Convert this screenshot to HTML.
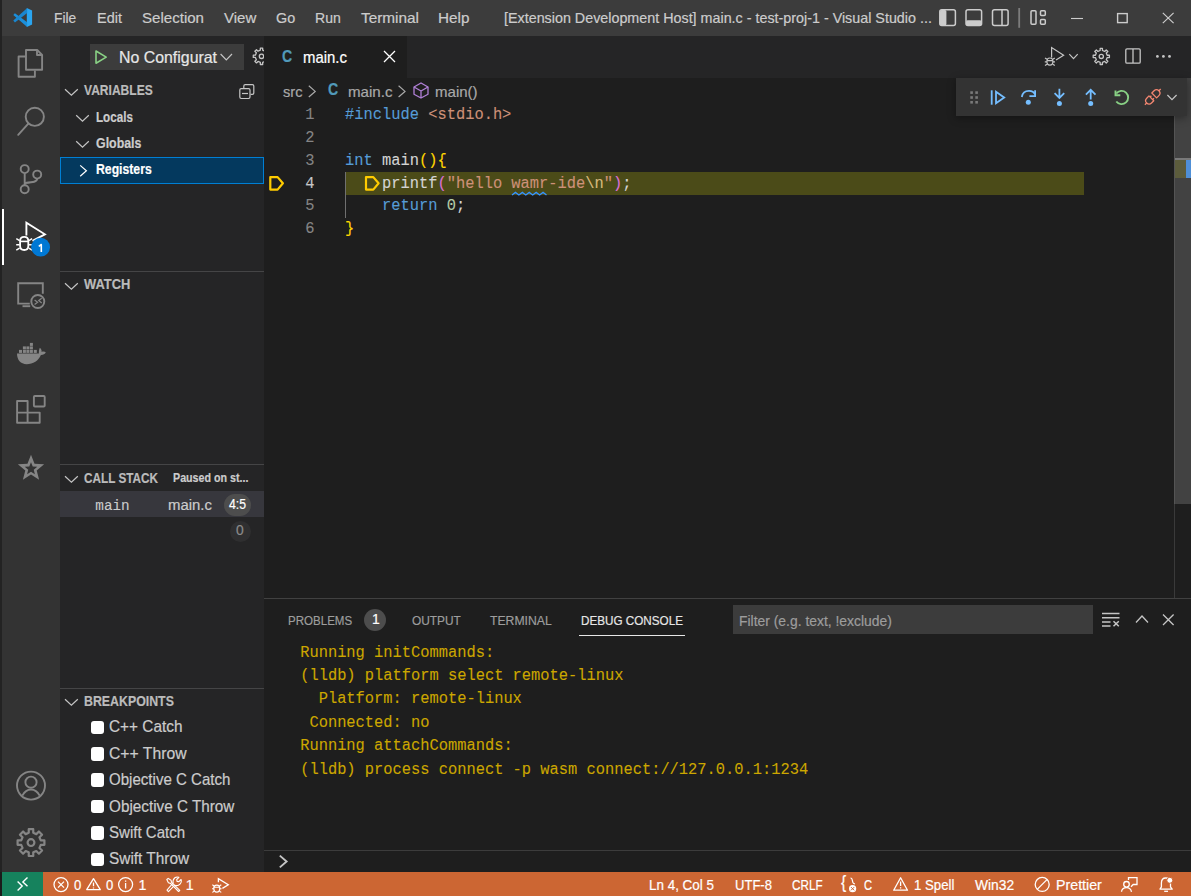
<!DOCTYPE html><html><head><meta charset="utf-8"><style>html,body{margin:0;padding:0;}body{width:1191px;height:896px;overflow:hidden;position:relative;background:#1e1e1e;font-family:"Liberation Sans",sans-serif;}</style></head><body>
<div style="position:absolute;left:0px;top:0px;width:1191px;height:896px;background:#1e1e1e;"></div>
<div style="position:absolute;left:0px;top:0px;width:2px;height:896px;background:#232323;"></div>
<div style="position:absolute;left:2px;top:0px;width:1189px;height:36px;background:#3c3c3c;"></div>
<div style="position:absolute;left:2px;top:36px;width:58px;height:836px;background:#333333;"></div>
<div style="position:absolute;left:60px;top:36px;width:204px;height:836px;background:#252526;"></div>
<div style="position:absolute;left:264px;top:36px;width:927px;height:42px;background:#252526;"></div>
<div style="position:absolute;left:264px;top:36px;width:143px;height:42px;background:#1e1e1e;"></div>
<div style="position:absolute;left:0px;top:872px;width:1191px;height:24px;background:#cc6633;"></div>
<div style="position:absolute;left:2px;top:872px;width:41px;height:24px;background:#16825d;"></div>
<div style="position:absolute;left:0px;top:872px;width:2px;height:24px;background:#1b1b1b;"></div>
<div style="position:absolute;left:54.40px;top:10.92px;font-family:'Liberation Sans', sans-serif;font-size:14.97px;line-height:14.97px;color:#cccccc;white-space:pre;-webkit-text-stroke:0.2px currentColor;transform:scaleX(0.9205);transform-origin:0 0;">File</div>
<div style="position:absolute;left:96.90px;top:10.92px;font-family:'Liberation Sans', sans-serif;font-size:14.97px;line-height:14.97px;color:#cccccc;white-space:pre;-webkit-text-stroke:0.2px currentColor;transform:scaleX(0.9653);transform-origin:0 0;">Edit</div>
<div style="position:absolute;left:142.00px;top:10.92px;font-family:'Liberation Sans', sans-serif;font-size:14.97px;line-height:14.97px;color:#cccccc;white-space:pre;-webkit-text-stroke:0.2px currentColor;transform:scaleX(1.0067);transform-origin:0 0;">Selection</div>
<div style="position:absolute;left:223.80px;top:10.92px;font-family:'Liberation Sans', sans-serif;font-size:14.97px;line-height:14.97px;color:#cccccc;white-space:pre;-webkit-text-stroke:0.2px currentColor;transform:scaleX(1.0026);transform-origin:0 0;">View</div>
<div style="position:absolute;left:275.70px;top:10.92px;font-family:'Liberation Sans', sans-serif;font-size:14.97px;line-height:14.97px;color:#cccccc;white-space:pre;-webkit-text-stroke:0.2px currentColor;transform:scaleX(0.9614);transform-origin:0 0;">Go</div>
<div style="position:absolute;left:315.20px;top:10.92px;font-family:'Liberation Sans', sans-serif;font-size:14.97px;line-height:14.97px;color:#cccccc;white-space:pre;-webkit-text-stroke:0.2px currentColor;transform:scaleX(0.9397);transform-origin:0 0;">Run</div>
<div style="position:absolute;left:360.60px;top:10.92px;font-family:'Liberation Sans', sans-serif;font-size:14.97px;line-height:14.97px;color:#cccccc;white-space:pre;-webkit-text-stroke:0.2px currentColor;transform:scaleX(1.0252);transform-origin:0 0;">Terminal</div>
<div style="position:absolute;left:438.20px;top:10.92px;font-family:'Liberation Sans', sans-serif;font-size:14.97px;line-height:14.97px;color:#cccccc;white-space:pre;-webkit-text-stroke:0.2px currentColor;transform:scaleX(1.0196);transform-origin:0 0;">Help</div>
<div style="position:absolute;left:503.70px;top:10.92px;font-family:'Liberation Sans', sans-serif;font-size:14.97px;line-height:14.97px;color:#cccccc;white-space:pre;-webkit-text-stroke:0.2px currentColor;transform:scaleX(0.9565);transform-origin:0 0;">[Extension Development Host] main.c - test-proj-1 - Visual Studio ...</div>
<div style="position:absolute;left:90px;top:44px;width:154px;height:26px;background:#3c3c3c;"></div>
<div style="position:absolute;left:118.90px;top:49.21px;font-family:'Liberation Sans', sans-serif;font-size:16.28px;line-height:16.28px;color:#e7e7e7;white-space:pre;-webkit-text-stroke:0.2px currentColor;transform:scaleX(0.9767);transform-origin:0 0;">No Configurat</div>
<div style="position:absolute;left:83.80px;top:83.44px;font-family:'Liberation Sans', sans-serif;font-size:14.53px;line-height:14.53px;color:#bbbbbb;font-weight:700;white-space:pre;-webkit-text-stroke:0.2px currentColor;transform:scaleX(0.8298);transform-origin:0 0;">VARIABLES</div>
<div style="position:absolute;left:96.00px;top:109.89px;font-family:'Liberation Sans', sans-serif;font-size:14.53px;line-height:14.53px;color:#cccccc;font-weight:700;white-space:pre;-webkit-text-stroke:0.2px currentColor;transform:scaleX(0.8035);transform-origin:0 0;">Locals</div>
<div style="position:absolute;left:96.20px;top:136.39px;font-family:'Liberation Sans', sans-serif;font-size:14.53px;line-height:14.53px;color:#cccccc;font-weight:700;white-space:pre;-webkit-text-stroke:0.2px currentColor;transform:scaleX(0.8537);transform-origin:0 0;">Globals</div>
<div style="position:absolute;left:60px;top:157px;width:204px;height:27px;background:#04395e;box-sizing:border-box;border:1px solid #007fd4;"></div>
<div style="position:absolute;left:96.20px;top:162.49px;font-family:'Liberation Sans', sans-serif;font-size:14.53px;line-height:14.53px;color:#ffffff;font-weight:700;white-space:pre;-webkit-text-stroke:0.2px currentColor;transform:scaleX(0.8423);transform-origin:0 0;">Registers</div>
<div style="position:absolute;left:60px;top:271px;width:204px;height:1px;background:#454546;"></div>
<div style="position:absolute;left:83.80px;top:277.39px;font-family:'Liberation Sans', sans-serif;font-size:14.53px;line-height:14.53px;color:#bbbbbb;font-weight:700;white-space:pre;-webkit-text-stroke:0.2px currentColor;transform:scaleX(0.8887);transform-origin:0 0;">WATCH</div>
<div style="position:absolute;left:60px;top:464px;width:204px;height:1px;background:#454546;"></div>
<div style="position:absolute;left:83.80px;top:470.69px;font-family:'Liberation Sans', sans-serif;font-size:14.53px;line-height:14.53px;color:#bbbbbb;font-weight:700;white-space:pre;-webkit-text-stroke:0.2px currentColor;transform:scaleX(0.8097);transform-origin:0 0;">CALL STACK</div>
<div style="position:absolute;left:172.90px;top:471.42px;font-family:'Liberation Sans', sans-serif;font-size:13.08px;line-height:13.08px;color:#cccccc;font-weight:700;white-space:pre;-webkit-text-stroke:0.2px currentColor;transform:scaleX(0.8178);transform-origin:0 0;">Paused on st...</div>
<div style="position:absolute;left:60px;top:491px;width:204px;height:26px;background:#37373d;"></div>
<div style="position:absolute;left:95.30px;top:498.55px;font-family:'Liberation Mono', monospace;font-size:14.3px;line-height:14.3px;color:#cccccc;white-space:pre;-webkit-text-stroke:0.1px currentColor;">main</div>
<div style="position:absolute;left:168.00px;top:496.57px;font-family:'Liberation Sans', sans-serif;font-size:15.26px;line-height:15.26px;color:#cccccc;white-space:pre;-webkit-text-stroke:0.2px currentColor;transform:scaleX(0.9790);transform-origin:0 0;">main.c</div>
<div style="position:absolute;left:224px;top:494px;width:27px;height:22px;background:#4d4d4d;border-radius:11px;"></div>
<div style="position:absolute;left:229.00px;top:497.19px;font-family:'Liberation Sans', sans-serif;font-size:14.53px;line-height:14.53px;color:#ffffff;white-space:pre;-webkit-text-stroke:0.2px currentColor;transform:scaleX(0.8414);transform-origin:0 0;">4:5</div>
<div style="position:absolute;left:230px;top:521px;width:21px;height:21px;background:#2f2f30;border-radius:11px;"></div>
<div style="position:absolute;left:236.00px;top:524.30px;font-family:'Liberation Sans', sans-serif;font-size:13.81px;line-height:13.81px;color:#8b8b8b;white-space:pre;-webkit-text-stroke:0.2px currentColor;">0</div>
<div style="position:absolute;left:60px;top:688px;width:204px;height:1px;background:#454546;"></div>
<div style="position:absolute;left:83.80px;top:693.69px;font-family:'Liberation Sans', sans-serif;font-size:14.53px;line-height:14.53px;color:#bbbbbb;font-weight:700;white-space:pre;-webkit-text-stroke:0.2px currentColor;transform:scaleX(0.8508);transform-origin:0 0;">BREAKPOINTS</div>
<div style="position:absolute;left:90.5px;top:720.6px;width:13.5px;height:13.5px;background:#ffffff;border-radius:3px;"></div>
<div style="position:absolute;left:108.50px;top:719.30px;font-family:'Liberation Sans', sans-serif;font-size:15.70px;line-height:15.70px;color:#cccccc;white-space:pre;-webkit-text-stroke:0.2px currentColor;transform:scaleX(0.9795);transform-origin:0 0;">C++ Catch</div>
<div style="position:absolute;left:90.5px;top:747.0px;width:13.5px;height:13.5px;background:#ffffff;border-radius:3px;"></div>
<div style="position:absolute;left:108.50px;top:745.70px;font-family:'Liberation Sans', sans-serif;font-size:15.70px;line-height:15.70px;color:#cccccc;white-space:pre;-webkit-text-stroke:0.2px currentColor;transform:scaleX(1.0025);transform-origin:0 0;">C++ Throw</div>
<div style="position:absolute;left:90.5px;top:773.4px;width:13.5px;height:13.5px;background:#ffffff;border-radius:3px;"></div>
<div style="position:absolute;left:108.50px;top:772.10px;font-family:'Liberation Sans', sans-serif;font-size:15.70px;line-height:15.70px;color:#cccccc;white-space:pre;-webkit-text-stroke:0.2px currentColor;transform:scaleX(0.9604);transform-origin:0 0;">Objective C Catch</div>
<div style="position:absolute;left:90.5px;top:799.8px;width:13.5px;height:13.5px;background:#ffffff;border-radius:3px;"></div>
<div style="position:absolute;left:108.50px;top:798.50px;font-family:'Liberation Sans', sans-serif;font-size:15.70px;line-height:15.70px;color:#cccccc;white-space:pre;-webkit-text-stroke:0.2px currentColor;transform:scaleX(0.9739);transform-origin:0 0;">Objective C Throw</div>
<div style="position:absolute;left:90.5px;top:826.2px;width:13.5px;height:13.5px;background:#ffffff;border-radius:3px;"></div>
<div style="position:absolute;left:108.50px;top:824.90px;font-family:'Liberation Sans', sans-serif;font-size:15.70px;line-height:15.70px;color:#cccccc;white-space:pre;-webkit-text-stroke:0.2px currentColor;transform:scaleX(0.9599);transform-origin:0 0;">Swift Catch</div>
<div style="position:absolute;left:90.5px;top:852.6px;width:13.5px;height:13.5px;background:#ffffff;border-radius:3px;"></div>
<div style="position:absolute;left:108.50px;top:851.30px;font-family:'Liberation Sans', sans-serif;font-size:15.70px;line-height:15.70px;color:#cccccc;white-space:pre;-webkit-text-stroke:0.2px currentColor;transform:scaleX(0.9810);transform-origin:0 0;">Swift Throw</div>
<div style="position:absolute;left:302.70px;top:49.66px;font-family:'Liberation Sans', sans-serif;font-size:15.99px;line-height:15.99px;color:#ffffff;white-space:pre;-webkit-text-stroke:0.2px currentColor;transform:scaleX(0.9323);transform-origin:0 0;">main.c</div>
<div style="position:absolute;left:282.80px;top:83.80px;font-family:'Liberation Sans', sans-serif;font-size:15.00px;line-height:15.00px;color:#a9a9a9;white-space:pre;-webkit-text-stroke:0.2px currentColor;transform:scaleX(0.9752);transform-origin:0 0;">src</div>
<div style="position:absolute;left:348.00px;top:83.80px;font-family:'Liberation Sans', sans-serif;font-size:15.00px;line-height:15.00px;color:#a9a9a9;white-space:pre;-webkit-text-stroke:0.2px currentColor;transform:scaleX(1.0074);transform-origin:0 0;">main.c</div>
<div style="position:absolute;left:434.60px;top:83.80px;font-family:'Liberation Sans', sans-serif;font-size:15.00px;line-height:15.00px;color:#a9a9a9;white-space:pre;-webkit-text-stroke:0.2px currentColor;transform:scaleX(1.0021);transform-origin:0 0;">main()</div>
<div style="position:absolute;left:345px;top:172px;width:739px;height:23px;background:#4b4b18;"></div>
<div style="position:absolute;left:345px;top:172px;width:1px;height:46px;background:#707070;"></div>
<div style="position:absolute;left:345.10px;top:108.20px;font-family:'Liberation Mono', monospace;font-size:15.4px;line-height:15.4px;color:#d4d4d4;white-space:pre;-webkit-text-stroke:0.1px currentColor;transform:scaleY(1.08);transform-origin:0 11.80px;"><span style="color:#569cd6">#include</span> <span style="color:#ce9178">&lt;stdio.h&gt;</span></div>
<div style="position:absolute;left:345.10px;top:153.80px;font-family:'Liberation Mono', monospace;font-size:15.4px;line-height:15.4px;color:#d4d4d4;white-space:pre;-webkit-text-stroke:0.1px currentColor;transform:scaleY(1.08);transform-origin:0 11.80px;"><span style="color:#569cd6">int</span> <span style="color:#d4d4d4">main</span><span style="color:#ffd700">()</span><span style="color:#ffd700">{</span></div>
<div style="position:absolute;left:345.10px;top:176.60px;font-family:'Liberation Mono', monospace;font-size:15.4px;line-height:15.4px;color:#d4d4d4;white-space:pre;-webkit-text-stroke:0.1px currentColor;transform:scaleY(1.08);transform-origin:0 11.80px;">    <span style="color:#d4d4d4">printf</span><span style="color:#da70d6">(</span><span style="color:#ce9178">"hello wamr-ide</span><span style="color:#d7ba7d">\n</span><span style="color:#ce9178">"</span><span style="color:#da70d6">)</span><span style="color:#d4d4d4">;</span></div>
<div style="position:absolute;left:345.10px;top:199.40px;font-family:'Liberation Mono', monospace;font-size:15.4px;line-height:15.4px;color:#d4d4d4;white-space:pre;-webkit-text-stroke:0.1px currentColor;transform:scaleY(1.08);transform-origin:0 11.80px;">    <span style="color:#569cd6">return</span> <span style="color:#b5cea8">0</span><span style="color:#d4d4d4">;</span></div>
<div style="position:absolute;left:345.10px;top:222.20px;font-family:'Liberation Mono', monospace;font-size:15.4px;line-height:15.4px;color:#d4d4d4;white-space:pre;-webkit-text-stroke:0.1px currentColor;transform:scaleY(1.08);transform-origin:0 11.80px;"><span style="color:#ffd700">}</span></div>
<div style="position:absolute;left:305.26px;top:108.20px;font-family:'Liberation Mono', monospace;font-size:15.4px;line-height:15.4px;color:#858585;white-space:pre;-webkit-text-stroke:0.1px currentColor;transform:scaleY(1.08);transform-origin:0 11.80px;">1</div>
<div style="position:absolute;left:305.26px;top:131.00px;font-family:'Liberation Mono', monospace;font-size:15.4px;line-height:15.4px;color:#858585;white-space:pre;-webkit-text-stroke:0.1px currentColor;transform:scaleY(1.08);transform-origin:0 11.80px;">2</div>
<div style="position:absolute;left:305.26px;top:153.80px;font-family:'Liberation Mono', monospace;font-size:15.4px;line-height:15.4px;color:#858585;white-space:pre;-webkit-text-stroke:0.1px currentColor;transform:scaleY(1.08);transform-origin:0 11.80px;">3</div>
<div style="position:absolute;left:305.26px;top:176.60px;font-family:'Liberation Mono', monospace;font-size:15.4px;line-height:15.4px;color:#c6c6c6;white-space:pre;-webkit-text-stroke:0.1px currentColor;transform:scaleY(1.08);transform-origin:0 11.80px;">4</div>
<div style="position:absolute;left:305.26px;top:199.40px;font-family:'Liberation Mono', monospace;font-size:15.4px;line-height:15.4px;color:#858585;white-space:pre;-webkit-text-stroke:0.1px currentColor;transform:scaleY(1.08);transform-origin:0 11.80px;">5</div>
<div style="position:absolute;left:305.26px;top:222.20px;font-family:'Liberation Mono', monospace;font-size:15.4px;line-height:15.4px;color:#858585;white-space:pre;-webkit-text-stroke:0.1px currentColor;transform:scaleY(1.08);transform-origin:0 11.80px;">6</div>
<svg style="position:absolute;left:0;top:0" width="1191" height="896"><path d="M512.00 195.0 L515.45 192.4 L518.90 195.0 L522.35 192.4 L525.80 195.0 L529.25 192.4 L532.70 195.0 L536.15 192.4 L539.60 195.0 L543.05 192.4 L546.50 195.0" stroke="#3794ff" stroke-width="1.3" fill="none"/></svg>
<div style="position:absolute;left:1174px;top:78px;width:17px;height:426px;background:#424242;"></div>
<div style="position:absolute;left:1174px;top:78px;width:1px;height:520px;background:rgba(127,127,127,0.3);"></div>
<div style="position:absolute;left:1175px;top:158px;width:16px;height:2px;background:#7a7a7a;"></div>
<div style="position:absolute;left:1175px;top:160px;width:11px;height:18px;background:#5c5c3c;"></div>
<div style="position:absolute;left:1186px;top:160px;width:5px;height:18px;background:#4f8fd6;"></div>
<div style="position:absolute;left:264px;top:598px;width:927px;height:1px;background:#414141;"></div>
<div style="position:absolute;left:287.50px;top:613.63px;font-family:'Liberation Sans', sans-serif;font-size:13.66px;line-height:13.66px;color:#9d9d9d;white-space:pre;-webkit-text-stroke:0.2px currentColor;transform:scaleX(0.8456);transform-origin:0 0;">PROBLEMS</div>
<div style="position:absolute;left:364px;top:609px;width:22px;height:22px;background:#4d4d4d;border-radius:11px;"></div>
<div style="position:absolute;left:372.00px;top:613.38px;font-family:'Liberation Sans', sans-serif;font-size:13.95px;line-height:13.95px;color:#ffffff;white-space:pre;-webkit-text-stroke:0.2px currentColor;">1</div>
<div style="position:absolute;left:412.00px;top:613.63px;font-family:'Liberation Sans', sans-serif;font-size:13.66px;line-height:13.66px;color:#9d9d9d;white-space:pre;-webkit-text-stroke:0.2px currentColor;transform:scaleX(0.8706);transform-origin:0 0;">OUTPUT</div>
<div style="position:absolute;left:489.90px;top:613.63px;font-family:'Liberation Sans', sans-serif;font-size:13.66px;line-height:13.66px;color:#9d9d9d;white-space:pre;-webkit-text-stroke:0.2px currentColor;transform:scaleX(0.8946);transform-origin:0 0;">TERMINAL</div>
<div style="position:absolute;left:580.60px;top:613.63px;font-family:'Liberation Sans', sans-serif;font-size:13.66px;line-height:13.66px;color:#e7e7e7;white-space:pre;-webkit-text-stroke:0.2px currentColor;transform:scaleX(0.8557);transform-origin:0 0;">DEBUG CONSOLE</div>
<div style="position:absolute;left:578.5px;top:634.5px;width:106.5px;height:1.5px;background:#e7e7e7;"></div>
<div style="position:absolute;left:733px;top:605px;width:360px;height:29px;background:#3c3c3c;"></div>
<div style="position:absolute;left:739.30px;top:613.79px;font-family:'Liberation Sans', sans-serif;font-size:14.53px;line-height:14.53px;color:#9d9d9d;white-space:pre;-webkit-text-stroke:0.2px currentColor;transform:scaleX(0.9572);transform-origin:0 0;">Filter (e.g. text, !exclude)</div>
<div style="position:absolute;left:300.20px;top:645.60px;font-family:'Liberation Mono', monospace;font-size:15.4px;line-height:15.4px;color:#cca700;white-space:pre;-webkit-text-stroke:0.1px currentColor;transform:scaleY(1.1);transform-origin:0 11.80px;">Running initCommands:</div>
<div style="position:absolute;left:300.20px;top:669.00px;font-family:'Liberation Mono', monospace;font-size:15.4px;line-height:15.4px;color:#cca700;white-space:pre;-webkit-text-stroke:0.1px currentColor;transform:scaleY(1.1);transform-origin:0 11.80px;">(lldb) platform select remote-linux</div>
<div style="position:absolute;left:300.20px;top:692.40px;font-family:'Liberation Mono', monospace;font-size:15.4px;line-height:15.4px;color:#cca700;white-space:pre;-webkit-text-stroke:0.1px currentColor;transform:scaleY(1.1);transform-origin:0 11.80px;">  Platform: remote-linux</div>
<div style="position:absolute;left:300.20px;top:715.80px;font-family:'Liberation Mono', monospace;font-size:15.4px;line-height:15.4px;color:#cca700;white-space:pre;-webkit-text-stroke:0.1px currentColor;transform:scaleY(1.1);transform-origin:0 11.80px;"> Connected: no</div>
<div style="position:absolute;left:300.20px;top:739.20px;font-family:'Liberation Mono', monospace;font-size:15.4px;line-height:15.4px;color:#cca700;white-space:pre;-webkit-text-stroke:0.1px currentColor;transform:scaleY(1.1);transform-origin:0 11.80px;">Running attachCommands:</div>
<div style="position:absolute;left:300.20px;top:762.60px;font-family:'Liberation Mono', monospace;font-size:15.4px;line-height:15.4px;color:#cca700;white-space:pre;-webkit-text-stroke:0.1px currentColor;transform:scaleY(1.1);transform-origin:0 11.80px;">(lldb) process connect -p wasm connect://127.0.0.1:1234</div>
<div style="position:absolute;left:264px;top:850px;width:927px;height:1px;background:#3c3c3c;"></div>
<div style="position:absolute;left:73.50px;top:878.44px;font-family:'Liberation Sans', sans-serif;font-size:14.24px;line-height:14.24px;color:#ffffff;white-space:pre;-webkit-text-stroke:0.2px currentColor;transform:scaleX(0.9217);transform-origin:0 0;">0</div>
<div style="position:absolute;left:106.00px;top:878.44px;font-family:'Liberation Sans', sans-serif;font-size:14.24px;line-height:14.24px;color:#ffffff;white-space:pre;-webkit-text-stroke:0.2px currentColor;transform:scaleX(0.9217);transform-origin:0 0;">0</div>
<div style="position:absolute;left:138.50px;top:878.44px;font-family:'Liberation Sans', sans-serif;font-size:14.24px;line-height:14.24px;color:#ffffff;white-space:pre;-webkit-text-stroke:0.2px currentColor;">1</div>
<div style="position:absolute;left:185.80px;top:878.44px;font-family:'Liberation Sans', sans-serif;font-size:14.24px;line-height:14.24px;color:#ffffff;white-space:pre;-webkit-text-stroke:0.2px currentColor;">1</div>
<div style="position:absolute;left:649.20px;top:878.31px;font-family:'Liberation Sans', sans-serif;font-size:14.39px;line-height:14.39px;color:#ffffff;white-space:pre;-webkit-text-stroke:0.2px currentColor;transform:scaleX(0.9341);transform-origin:0 0;">Ln 4, Col 5</div>
<div style="position:absolute;left:735.00px;top:878.31px;font-family:'Liberation Sans', sans-serif;font-size:14.39px;line-height:14.39px;color:#ffffff;white-space:pre;-webkit-text-stroke:0.2px currentColor;transform:scaleX(0.9076);transform-origin:0 0;">UTF-8</div>
<div style="position:absolute;left:791.70px;top:878.31px;font-family:'Liberation Sans', sans-serif;font-size:14.39px;line-height:14.39px;color:#ffffff;white-space:pre;-webkit-text-stroke:0.2px currentColor;transform:scaleX(0.8145);transform-origin:0 0;">CRLF</div>
<div style="position:absolute;left:863.75px;top:878.31px;font-family:'Liberation Sans', sans-serif;font-size:14.39px;line-height:14.39px;color:#ffffff;white-space:pre;-webkit-text-stroke:0.2px currentColor;transform:scaleX(0.7748);transform-origin:0 0;">C</div>
<div style="position:absolute;left:914.00px;top:878.31px;font-family:'Liberation Sans', sans-serif;font-size:14.39px;line-height:14.39px;color:#ffffff;white-space:pre;-webkit-text-stroke:0.2px currentColor;transform:scaleX(0.9181);transform-origin:0 0;">1 Spell</div>
<div style="position:absolute;left:974.50px;top:878.31px;font-family:'Liberation Sans', sans-serif;font-size:14.39px;line-height:14.39px;color:#ffffff;white-space:pre;-webkit-text-stroke:0.2px currentColor;transform:scaleX(0.9613);transform-origin:0 0;">Win32</div>
<div style="position:absolute;left:1055.50px;top:878.31px;font-family:'Liberation Sans', sans-serif;font-size:14.39px;line-height:14.39px;color:#ffffff;white-space:pre;-webkit-text-stroke:0.2px currentColor;transform:scaleX(0.9897);transform-origin:0 0;">Prettier</div>
<div style="position:absolute;left:2px;top:209px;width:2px;height:56px;background:#ffffff;"></div>
<div style="position:absolute;left:281.90px;top:48.56px;font-family:'Liberation Sans', sans-serif;font-size:15.99px;line-height:15.99px;color:#519aba;font-weight:700;white-space:pre;-webkit-text-stroke:0.2px currentColor;transform:scaleX(0.8836);transform-origin:0 0;">C</div>
<div style="position:absolute;left:327.90px;top:82.46px;font-family:'Liberation Sans', sans-serif;font-size:15.99px;line-height:15.99px;color:#519aba;font-weight:700;white-space:pre;-webkit-text-stroke:0.2px currentColor;transform:scaleX(0.8836);transform-origin:0 0;">C</div>
<div style="position:absolute;left:956px;top:78px;width:231px;height:37.5px;background:#333333;box-shadow:0 2px 8px rgba(0,0,0,0.36);"></div>
<div style="position:absolute;left:841.20px;top:874.23px;font-family:'Liberation Sans', sans-serif;font-size:17.44px;line-height:17.44px;color:#ffffff;white-space:pre;-webkit-text-stroke:0.2px currentColor;transform:scaleX(0.8926);transform-origin:0 0;">{</div>
<svg style="position:absolute;left:0;top:0" width="1191" height="896" viewBox="0 0 1191 896"><path d="M26.8 7.9 L32.1 10.6 L32.1 24.4 L26.8 27.1 Z" fill="#2aa5f0"/><path d="M13.3 15.0 L14.9 13.2 L27.2 22.3 L27.2 26.9 Z" fill="#1b8fdb"/><path d="M13.3 20.6 L14.9 22.4 L27.2 12.9 L27.2 8.1 Z" fill="#1a86cf"/><g fill="none" stroke="#858585" stroke-width="1.9" stroke-linejoin="round"><path d="M25.4 56.5 H18.6 V76.8 H34.9 V70.6"/><path d="M26 50 H37.2 L42.1 54.9 V69.8 H26 Z"/><path d="M37 50.2 V55 H42"/></g><g fill="none" stroke="#858585" stroke-width="1.9"><circle cx="34.8" cy="116.8" r="9.1"/><path d="M28.3 123.6 L18.2 134.8" stroke-linecap="round"/></g><g fill="none" stroke="#858585" stroke-width="1.9"><circle cx="24.7" cy="169.1" r="4"/><circle cx="24.7" cy="189.3" r="4"/><circle cx="37.2" cy="174.6" r="4"/><path d="M24.7 173.1 V185.3"/><path d="M37.2 178.6 C37.2 182 33 182.3 24.7 183"/></g><g fill="none" stroke="#ffffff" stroke-width="1.9" stroke-linejoin="miter"><path d="M26.4 235.4 V222.6 L44.9 234.3 L32.5 240.8"/></g><g fill="none" stroke="#ffffff" stroke-width="1.8"><path d="M20.1 246 V241 C20.1 238.2 21.7 236.9 24.2 236.9 C26.7 236.9 28.3 238.2 28.3 241 V246 C28.3 248.8 26.7 250 24.2 250 C21.7 250 20.1 248.8 20.1 246 Z"/><path d="M20 241.4 H28.4" stroke-width="1.6"/><path d="M16.3 238.6 L19.6 240.6 M16.2 244.8 H19.6 M16.3 250.2 L19.6 248.2 M32.1 238.6 L28.8 240.6 M32.2 244.8 H28.8 M32.1 250.2 L28.8 248.2" stroke-width="1.5"/></g><circle cx="40.6" cy="247.2" r="9.4" fill="#0078d4"/><g fill="none" stroke="#858585" stroke-width="1.9"><path d="M29.8 303.6 H18.2 V283.2 H42.8 V293.8"/><path d="M22.5 306.2 H30.2"/><circle cx="37.8" cy="301.5" r="6.5"/><path d="M34.6 300 L37.6 302.3 L34.6 304.6 M41.7 298.3 L38.8 300.6 L41.7 302.9" stroke-width="1.3"/></g><g fill="#858585"><path d="M17 353.6 H38.9 C38.8 351.3 39.1 349.3 39.8 347.8 C41 348.8 41.9 350.4 41.6 351.9 C43.1 351.4 44.8 351.5 45.8 352.3 C45 354.1 43 355.2 40.9 355.1 C38.6 360.8 33.2 364.2 26.6 364.2 C20.6 364.2 17 360 17 353.6 Z"/><rect x="19" y="349.9" width="3" height="3"/><rect x="22.9" y="349.9" width="3" height="3"/><rect x="26.4" y="349.9" width="3" height="3"/><rect x="29.9" y="349.9" width="3" height="3"/><rect x="33.8" y="349.9" width="3" height="3"/><rect x="22.9" y="346.4" width="3" height="3"/><rect x="26.4" y="346.4" width="3" height="3"/><rect x="29.9" y="346.4" width="3" height="3"/><rect x="29.9" y="342.9" width="3" height="3"/></g><g fill="none" stroke="#858585" stroke-width="1.9" stroke-linejoin="round"><rect x="33.9" y="396" width="10.8" height="10.5" rx="1"/><path d="M17.1 401 H27.6 V412.6 H39.7 V422.7 H17.1 Z M17.1 412.6 H27.6 V422.7"/></g><path d="M31.00 454.80 L34.53 463.75 L44.12 464.34 L36.71 470.45 L39.11 479.76 L31.00 474.60 L22.89 479.76 L25.29 470.45 L17.88 464.34 L27.47 463.75 Z M29.30 466.55 L24.72 466.86 L28.24 469.80 L27.12 474.24 L31.00 471.80 L34.88 474.24 L33.76 469.80 L37.28 466.86 L32.70 466.55 L31.00 462.30 Z" fill="#858585" fill-rule="evenodd"/><g fill="none" stroke="#858585" stroke-width="1.9"><circle cx="31" cy="785.6" r="14"/><circle cx="31" cy="782.2" r="5.6"/><path d="M22.3 795.6 C24.5 791.5 27.5 789.5 31 789.5 C34.5 789.5 37.5 791.5 39.7 795.6"/></g><g fill="none" stroke="#858585" stroke-width="2.2" stroke-linejoin="round"><path d="M28.76 832.85 L28.74 829.19 L33.26 829.19 L33.24 832.85 L36.31 834.13 L38.89 831.52 L42.08 834.71 L39.47 837.29 L40.75 840.36 L44.41 840.34 L44.41 844.86 L40.75 844.84 L39.47 847.91 L42.08 850.49 L38.89 853.68 L36.31 851.07 L33.24 852.35 L33.26 856.01 L28.74 856.01 L28.76 852.35 L25.69 851.07 L23.11 853.68 L19.92 850.49 L22.53 847.91 L21.25 844.84 L17.59 844.86 L17.59 840.34 L21.25 840.36 L22.53 837.29 L19.92 834.71 L23.11 831.52 L25.69 834.13 Z"/><circle cx="31" cy="842.6" r="3.4"/></g><g fill="none" stroke="#cccccc" stroke-width="1.5"><rect x="939.8" y="9.8" width="15.6" height="15.6" rx="2"/><rect x="966" y="9.8" width="15.6" height="15.6" rx="2"/><rect x="992.5" y="9.8" width="15.6" height="15.6" rx="2"/><path d="M1002 10 V25.2"/></g><rect x="940" y="10" width="6.4" height="15.2" fill="#cccccc" rx="1.5"/><rect x="966" y="20.2" width="15.6" height="5.2" fill="#cccccc" rx="1.5"/><rect x="1018.3" y="8" width="1.8" height="19.8" fill="#7c7c7c"/><g fill="none" stroke="#cccccc" stroke-width="1.5"><rect x="1031" y="10.8" width="5" height="13.4" rx="1"/><rect x="1040.5" y="10.8" width="4.8" height="4.6" rx="1"/><rect x="1040.5" y="19.6" width="4.8" height="4.6" rx="1"/></g><g fill="none" stroke="#cccccc" stroke-width="1.1"><path d="M1071 18.5 H1083"/><rect x="1117.6" y="13.6" width="9.6" height="9" stroke-width="1.4"/><path d="M1162.8 12.9 L1173.6 23.1 M1173.6 12.9 L1162.8 23.1" stroke-width="1.2"/></g><path d="M96 51 L106.2 57.1 L96 63.2 Z" fill="none" stroke="#89d185" stroke-width="1.6" stroke-linejoin="round"/><path d="M220.6 54 L226.3 59.8 L232 54" fill="none" stroke="#c5c5c5" stroke-width="1.2"/><svg x="0" y="0" width="264" height="896" overflow="hidden"><g fill="none" stroke="#c5c5c5" stroke-width="1.3" stroke-linejoin="round"><path d="M260.33 50.21 L260.34 48.08 L262.66 48.08 L262.67 50.21 L264.98 51.17 L266.49 49.67 L268.13 51.31 L266.63 52.82 L267.59 55.13 L269.72 55.14 L269.72 57.46 L267.59 57.47 L266.63 59.78 L268.13 61.29 L266.49 62.93 L264.98 61.43 L262.67 62.39 L262.66 64.52 L260.34 64.52 L260.33 62.39 L258.02 61.43 L256.51 62.93 L254.87 61.29 L256.37 59.78 L255.41 57.47 L253.28 57.46 L253.28 55.14 L255.41 55.13 L256.37 52.82 L254.87 51.31 L256.51 49.67 L258.02 51.17 Z"/><circle cx="261.5" cy="56.3" r="2.2"/></g></svg><g fill="none" stroke="#c5c5c5" stroke-width="1.2"><path d="M65 89.2 L71.4 95.1 L77.8 89.2"/><path d="M76.2 115.2 L82.5 121.1 L88.8 115.2"/><path d="M76.2 141.2 L82.5 147.1 L88.8 141.2"/><path d="M80.2 165.4 L86.4 170.8 L80.2 176.2" stroke="#ffffff"/><path d="M65 283.2 L71.4 289.1 L77.8 283.2"/><path d="M65 476.2 L71.4 482.1 L77.8 476.2"/><path d="M65 699.2 L71.4 705.1 L77.8 699.2"/></g><g fill="none" stroke="#c5c5c5" stroke-width="1.2"><path d="M243.8 88.6 V86 Q243.8 84.6 245.2 84.6 H252.4 Q253.8 84.6 253.8 86 V93 Q253.8 94.3 252.4 94.3 H250.6"/><rect x="239.8" y="88.6" width="10.2" height="9.9" rx="1.4"/><path d="M242 93.5 H248"/></g><path d="M384 51 L395 62 M395 51 L384 62" stroke="#ffffff" stroke-width="1.3" fill="none"/><g fill="none" stroke="#a9a9a9" stroke-width="1.2"><path d="M308.8 85.8 L315.2 91.4 L308.8 97"/><path d="M398.6 85.8 L405 91.4 L398.6 97"/></g><g fill="none" stroke="#b180d7" stroke-width="1.3" stroke-linejoin="round"><path d="M421 83 L428 87 V94.2 L421 98 L414 94.2 V87 Z"/><path d="M414 87 L421 91 L428 87 M421 91 V98"/></g><g fill="none" stroke="#c5c5c5" stroke-width="1.2"><path d="M1051.6 57.5 V47.6 L1063.6 55.2 L1056 60"/><ellipse cx="1049.9" cy="61.6" rx="3" ry="3.6"/><path d="M1047 60.7 H1052.8 M1045 58 L1047 59.3 M1054.8 58 L1052.8 59.3 M1044.8 61.8 H1046.9 M1055 61.8 H1052.9 M1045 65.5 L1047 64.2 M1054.8 65.5 L1052.8 64.2"/><path d="M1069.3 54.2 L1073.5 58.6 L1077.7 54.2"/></g><g fill="none" stroke="#c5c5c5" stroke-width="1.3" stroke-linejoin="round"><path d="M1100.17 50.51 L1100.15 48.28 L1102.45 48.28 L1102.43 50.51 L1104.67 51.43 L1106.23 49.85 L1107.85 51.47 L1106.27 53.03 L1107.19 55.27 L1109.42 55.25 L1109.42 57.55 L1107.19 57.53 L1106.27 59.77 L1107.85 61.33 L1106.23 62.95 L1104.67 61.37 L1102.43 62.29 L1102.45 64.52 L1100.15 64.52 L1100.17 62.29 L1097.93 61.37 L1096.37 62.95 L1094.75 61.33 L1096.33 59.77 L1095.41 57.53 L1093.18 57.55 L1093.18 55.25 L1095.41 55.27 L1096.33 53.03 L1094.75 51.47 L1096.37 49.85 L1097.93 51.43 Z"/><circle cx="1101.3" cy="56.4" r="2.1"/></g><g fill="none" stroke="#c5c5c5" stroke-width="1.3"><rect x="1125.8" y="48.9" width="14.4" height="14.2" rx="1.2"/><path d="M1133 49 V63"/></g><g fill="#c5c5c5"><circle cx="1157.4" cy="56.4" r="1.4"/><circle cx="1163.4" cy="56.4" r="1.4"/><circle cx="1169.5" cy="56.4" r="1.4"/></g><g fill="#7a7a7a"><rect x="970.3" y="91.3" width="2.6" height="2.6"/><rect x="975.3" y="91.3" width="2.6" height="2.6"/><rect x="970.3" y="96.2" width="2.6" height="2.6"/><rect x="975.3" y="96.2" width="2.6" height="2.6"/><rect x="970.3" y="101" width="2.6" height="2.6"/><rect x="975.3" y="101" width="2.6" height="2.6"/></g><g fill="none" stroke="#75beff" stroke-width="1.8" stroke-linejoin="miter"><path d="M991.7 90.3 V104.7"/><path d="M996 91.8 L1004.2 97.5 L996 103.2 Z"/><path d="M1021.8 97 C1022.5 92.5 1026 90.8 1029 90.8 C1032 90.8 1034 92 1035 94.3"/><path d="M1035.1 90.2 V96.2 H1029.4"/><path d="M1059.4 88.8 V97.8 M1054.6 93.2 L1059.4 98 L1064.2 93.2"/><path d="M1090.7 89.8 V99.4 M1085.9 94.6 L1090.7 89.8 L1095.5 94.6"/></g><g fill="#75beff"><circle cx="1028.3" cy="102.2" r="2.5"/><circle cx="1059.4" cy="103.5" r="2.5"/><circle cx="1090.7" cy="103.5" r="2.5"/></g><g fill="none" stroke="#89d185" stroke-width="1.9"><path d="M1116.3 93.5 A6.6 6.6 0 1 1 1116.3 101.5"/><path d="M1115.5 90.5 V95.3 H1120.3"/></g><g fill="none" stroke="#f48771" stroke-width="1.3" stroke-linejoin="round" transform="rotate(-45 1152.8 96.9)"><path d="M1150.8 93.5 V100.3 H1147.6 A3.4 3.4 0 0 1 1147.6 93.5 Z"/><path d="M1144.2 96.9 H1141.6"/><path d="M1150.8 95.1 H1152.6 M1150.8 98.7 H1152.6"/><path d="M1154.8 93.5 V100.3 H1158 A3.4 3.4 0 0 0 1158 93.5 Z"/><path d="M1161.4 96.9 H1164"/></g><path d="M1167.4 95 L1172 99.6 L1176.6 95" fill="none" stroke="#c5c5c5" stroke-width="1.2"/><path d="M270.3 177.1 H277.6 L282.90000000000003 183.3 L277.6 189.6 H270.3 Z" fill="none" stroke="#ffcc00" stroke-width="2.2" stroke-linejoin="round"/><path d="M366.0 177.1 H373.3 L378.6 183.3 L373.3 189.6 H366.0 Z" fill="none" stroke="#ffcc00" stroke-width="2.2" stroke-linejoin="round"/><g fill="none" stroke="#c5c5c5" stroke-width="1.4"><path d="M1102 613.5 H1119.5 M1102 617.8 H1119.5 M1102 622 H1110.5 M1102 626 H1110.5"/><path d="M1113.5 621.2 L1118.8 626.3 M1118.8 621.2 L1113.5 626.3" stroke-width="1.5"/><path d="M1136 622.5 L1142 616 L1148 622.5" stroke-width="1.3"/><path d="M1163 614.5 L1173.6 625 M1173.6 614.5 L1163 625" stroke-width="1.3"/><path d="M279.8 855.6 L286.6 861.5 L279.8 867.4" stroke-width="1.9"/></g><g fill="none" stroke="#ffffff" stroke-width="1.3"><path d="M17.6 881.6 L22.2 886.1 L17.6 890.5 M27.5 877.6 L22.9 882 L27.5 886.3" stroke-width="1.4"/><circle cx="61" cy="884.6" r="7"/><path d="M58 881.6 L64 887.6 M64 881.6 L58 887.6"/><path d="M93.5 878.7 L100.3 889.6 H86.7 Z" stroke-linejoin="round"/><path d="M93.5 882.5 V886.2 M93.5 887.6 V888.6"/><circle cx="125.6" cy="884.6" r="7"/><path d="M125.6 883 V888.6 M125.6 880.6 V881.8"/><path d="M166.8 879.5 L168.2 878.4 L171 880.2 L171.6 882.3 L179.8 890.4 L178.6 891.5 L170.5 883.4 L168.4 882.8 Z" stroke-width="1.1" stroke-linejoin="round"/><path d="M167 890.2 L168.4 891.6 L174.8 885.2 C177.2 886.2 180 885 181 882.6 C181.5 881.4 181.4 880.3 181.1 879.5 L178.9 881.7 L177 881.4 L176.7 879.5 L178.9 877.3 C176.5 876.6 174.2 877.8 173.3 880 C172.9 881 172.9 882 173.2 882.9 Z" stroke-width="1.1" stroke-linejoin="round"/><path d="M218.4 882.3 V878.6 L228.3 884.7 L222.4 888.4" stroke-width="1.3"/><ellipse cx="216.8" cy="888.6" rx="3" ry="3.5" stroke-width="1.3"/><path d="M213.8 887.2 H219.8 M212.3 884.8 L214.2 886 M221.3 884.8 L219.4 886 M212 888.8 H213.8 M221.6 888.8 H219.8 M212.3 892.4 L214.2 891.2 M221.3 892.4 L219.4 891.2" stroke-width="1.1"/><path d="M893.7 890.2 L900.6 877.8 L907.5 890.2 Z" stroke-linejoin="round"/><path d="M900.6 881.5 V886 M900.6 887.3 V888.5"/><circle cx="1042.2" cy="884.4" r="7"/><path d="M1047.2 879.4 L1037.2 889.4"/><path d="M1128.5 880 V877.6 H1137 V884.5 H1133.2 L1131 886.8"/><circle cx="1126.5" cy="884.3" r="2.8"/><path d="M1121.5 891.8 C1121.8 889 1124 887.6 1126.5 887.6 C1129 887.6 1131 889 1131.5 891.8"/><path d="M1160 889.2 H1172.2 L1170.5 886.8 V883 C1170.5 880 1168.5 878 1165.8 878 C1163 878 1161.4 880 1161.4 883 V886.8 Z" stroke-linejoin="round"/><path d="M1164.2 891.3 H1168"/></g><circle cx="1169.8" cy="880.3" r="3" fill="#ffffff" stroke="#cc6633" stroke-width="1"/><path d="M850.5 878 C852.8 878 852.2 881.5 853 882.8 C853.6 883.8 855 884 855 884" fill="none" stroke="#ffffff" stroke-width="1.2"/><circle cx="852.6" cy="888.7" r="3.6" fill="#ffffff"/><path d="M851 887.1 L854.2 890.3 M854.2 887.1 L851 890.3" stroke="#cc6633" stroke-width="1"/></svg>
<svg style="position:absolute;left:0;top:0" width="1191" height="896"><path d="M41.3 251.9 V244.5 L38.8 246.3" fill="none" stroke="#ffffff" stroke-width="1.6" stroke-linejoin="round"/></svg>
</body></html>
